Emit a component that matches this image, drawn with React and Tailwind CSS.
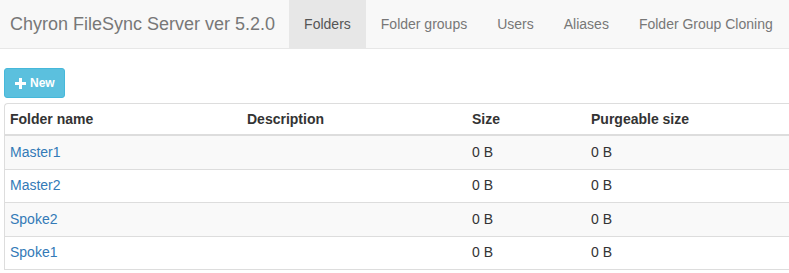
import React from 'react';

const navItems = ['Folders', 'Folder groups', 'Users', 'Aliases', 'Folder Group Cloning'];

const folders = [
  { name: 'Master1', description: '', size: '0 B', purgeable: '0 B' },
  { name: 'Master2', description: '', size: '0 B', purgeable: '0 B' },
  { name: 'Spoke2', description: '', size: '0 B', purgeable: '0 B' },
  { name: 'Spoke1', description: '', size: '0 B', purgeable: '0 B' },
];

const cols = 'grid grid-cols-[237px_225px_119px_1fr]';

const PlusIcon = () => (
  <svg width="11" height="11" viewBox="0 0 11 11" fill="white">
    <rect x="4" y="0" width="3" height="11" />
    <rect x="0" y="4" width="11" height="3" />
  </svg>
);

export default function App() {
  return (
    <div className="w-[789px] h-[273px] overflow-hidden bg-white font-['Liberation_Sans',Arial,sans-serif] text-[14px] text-[#333]">
      <nav className="flex h-[49px] bg-[#f8f8f8] border-b border-[#e7e7e7]">
        <div className="flex items-center pl-[10px] pr-[14px] text-[18px] text-[#777]">
          Chyron FileSync Server ver 5.2.0
        </div>
        {navItems.map((item, i) => (
          <a
            key={item}
            href="#"
            className={`flex items-center px-[15px] ${i === 0 ? 'bg-[#e7e7e7] text-[#555]' : 'text-[#777]'}`}
          >
            {item}
          </a>
        ))}
      </nav>

      <div className="pl-[4px] pt-[19px]">
        <button className="flex items-center gap-[4px] h-[30px] pl-[10px] pr-[9px] rounded-[3px] bg-[#5bc0de] border border-[#46b8da] text-white text-[12px] font-bold">
          <PlusIcon />
          New
        </button>

        <div className="mt-[5px] w-[840px] border-t border-l border-[#ddd] rounded-tl-[4px]">
          <div className={`${cols} h-[32px] items-center border-b-2 border-[#ddd] font-bold`}>
            <div className="px-[5px]">Folder name</div>
            <div className="px-[5px]">Description</div>
            <div className="px-[5px]">Size</div>
            <div className="px-[5px]">Purgeable size</div>
          </div>
          {folders.map((f, i) => (
            <div
              key={f.name}
              className={`${cols} h-[33.5px] items-center border-b border-[#ddd] ${i % 2 === 0 ? 'bg-[#f9f9f9]' : 'bg-white'}`}
            >
              <div className="px-[5px]">
                <a href="#" className="text-[#337ab7]">{f.name}</a>
              </div>
              <div className="px-[5px]">{f.description}</div>
              <div className="px-[5px]">{f.size}</div>
              <div className="px-[5px]">{f.purgeable}</div>
            </div>
          ))}
        </div>
      </div>
    </div>
  );
}
